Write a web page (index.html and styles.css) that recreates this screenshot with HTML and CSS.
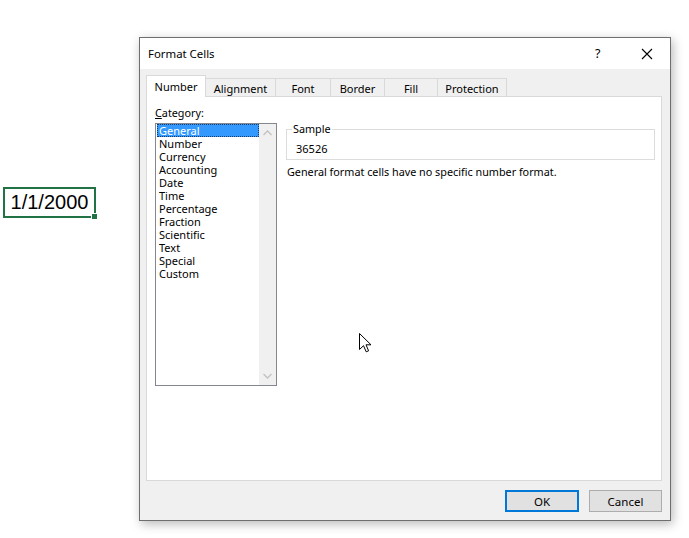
FILE: index.html
```html
<!DOCTYPE html>
<html>
<head>
<meta charset="utf-8">
<link rel="stylesheet" href="styles.css">
</head>
<body>
<div class="desk">
  <div class="cell">1/1/2000<span class="handle"></span></div>
  <div class="dialog">
    <div class="titlebar">
      <span class="title">Format Cells</span>
      <span class="help">?</span>
      <span class="close"><svg width="12" height="12" viewBox="0 0 12 12"><path d="M1 1 L11 11 M11 1 L1 11" stroke="#000" stroke-width="1.1" fill="none"/></svg></span>
    </div>
    <div class="content">
      <div class="tabs">
        <div class="tab active">Number</div>
        <div class="tab t-align">Alignment</div>
        <div class="tab t-font">Font</div>
        <div class="tab t-border">Border</div>
        <div class="tab t-fill">Fill</div>
        <div class="tab t-prot">Protection</div>
      </div>
      <div class="panel">
        <div class="left">
          <div class="cat-label"><u>C</u>ategory:</div>
          <div class="listbox">
            <div class="items">
              <div class="item selected">General</div>
              <div class="item">Number</div>
              <div class="item">Currency</div>
              <div class="item">Accounting</div>
              <div class="item">Date</div>
              <div class="item">Time</div>
              <div class="item">Percentage</div>
              <div class="item">Fraction</div>
              <div class="item">Scientific</div>
              <div class="item">Text</div>
              <div class="item">Special</div>
              <div class="item">Custom</div>
            </div>
            <div class="scrollbar">
              <svg width="9" height="6" viewBox="0 0 9 6"><path d="M0.5 5 L4.5 1 L8.5 5" stroke="#c2c2c2" stroke-width="1.3" fill="none"/></svg>
              <svg width="9" height="6" viewBox="0 0 9 6"><path d="M0.5 1 L4.5 5 L8.5 1" stroke="#c2c2c2" stroke-width="1.3" fill="none"/></svg>
            </div>
          </div>
        </div>
        <div class="right">
          <fieldset class="sample">
            <legend>Sample</legend>
            <div class="sample-value">36526</div>
          </fieldset>
          <div class="desc">General format cells have no specific number format.</div>
        </div>
      </div>
      <div class="buttons">
        <div class="btn ok">OK</div>
        <div class="btn cancel">Cancel</div>
      </div>
    </div>
  </div>
</div>
<svg class="cursor" width="13" height="20" viewBox="0 0 13 20"><path d="M0.5 0.5 L0.5 16.5 L4.5 12.7 L7.2 18.8 L9.6 17.8 L7 11.8 L12 11.8 Z" fill="#fff" stroke="#000" stroke-width="1" stroke-linejoin="miter"/></svg>
</body>
</html>
```
FILE: styles.css
```css
html, body {
  margin: 0;
  padding: 0;
  background: #ffffff;
}
body {
  width: 689px;
  height: 538px;
  overflow: hidden;
  position: relative;
  font-family: "Noto Sans", "Open Sans", sans-serif;
  font-size: 11px;
  color: #000;
}
.desk {
  display: flex;
  align-items: flex-start;
  padding: 37px 0 0 3px;
}
.cell {
  position: relative;
  margin-top: 150px;
  width: 89px;
  height: 27px;
  border: 2px solid #217346;
  font-family: "Liberation Sans", Arial, sans-serif;
  font-size: 20px;
  line-height: 27px;
  text-align: center;
  color: #000;
}
.handle {
  position: absolute;
  right: -4px;
  bottom: -4px;
  width: 5px;
  height: 5px;
  background: #217346;
  border: 1px solid #fff;
}
.dialog {
  margin-left: 43px;
  width: 530px;
  height: 482px;
  border: 1px solid #6e6e6e;
  background: #f0f0f0;
  box-shadow: 2px 3px 10px rgba(0,0,0,0.28);
  display: flex;
  flex-direction: column;
}
.titlebar {
  height: 31px;
  background: #fff;
  display: flex;
  align-items: center;
  padding-left: 8px;
}
.title {
  flex: 1;
  font-size: 11.4px;
}
.help {
  font-size: 12.5px;
  width: 12px;
  margin-right: 34px;
}
.close {
  width: 12px;
  margin-right: 17px;
  display: flex;
}
.content {
  padding: 7px 8px 0 6px;
  display: flex;
  flex-direction: column;
}
.tabs {
  display: flex;
  height: 20px;
  align-items: flex-end;
  position: relative;
  z-index: 1;
}
.tab {
  box-sizing: border-box;
  height: 18px;
  border-top: 1px solid #d9d9d9;
  border-right: 1px solid #d9d9d9;
  background: #f0f0f0;
  display: flex;
  align-items: center;
  justify-content: center;
  font-size: 11px;
  padding-top: 1px;
}
.tab.active {
  width: 60px;
  height: 22px;
  margin-bottom: -1px;
  border-left: 1px solid #d9d9d9;
  background: #fff;
  padding-top: 0;
  padding-bottom: 1px;
}
.t-align { width: 70px; }
.t-font { width: 55px; }
.t-border { width: 54px; }
.t-fill { width: 53px; }
.t-prot { width: 69px; }
.panel {
  height: 383px;
  border: 1px solid #d9d9d9;
  background: #fff;
  display: flex;
  align-items: flex-start;
}
.left {
  margin-left: 8px;
  width: 122px;
}
.cat-label {
  margin-top: 9px;
  height: 17px;
  line-height: 14px;
  font-size: 10.8px;
}
.listbox {
  width: 120px;
  height: 261px;
  border: 1px solid #828790;
  display: flex;
}
.items {
  flex: 1;
  padding: 0 0 0 1px;
}
.item {
  height: 13px;
  line-height: 13px;
  padding-left: 2px;
  font-size: 11px;
}
.item.selected {
  background: #3399ff;
  color: #fff;
  outline: 1px dotted #1a3a66;
  outline-offset: -1px;
}
.scrollbar {
  width: 17px;
  background: #f0f0f0;
  display: flex;
  flex-direction: column;
  justify-content: space-between;
  align-items: center;
  padding: 6px 0 6px;
}
.right {
  margin-left: 9px;
  width: 369px;
}
.sample {
  margin: 25px 0 0 0;
  padding: 4px 0 0 9px;
  height: 32px;
  border: 1px solid #dcdcdc;
  min-width: 0;
}
.sample legend {
  padding: 0 1px;
  margin-left: -4px;
  font-size: 10.8px;
  line-height: 14px;
}
.sample-value {
  line-height: 18px;
  font-size: 11px;
}
.desc {
  margin-top: 5px;
  margin-left: 1px;
  font-size: 10.8px;
  line-height: 14px;
}
.buttons {
  display: flex;
  justify-content: flex-end;
  gap: 10px;
  margin-top: 9px;
}
.btn {
  height: 22px;
  box-sizing: border-box;
  background: #e1e1e1;
  display: flex;
  align-items: center;
  justify-content: center;
  font-size: 11.5px;
}
.ok {
  width: 74px;
  border: 2px solid #0078d7;
}
.cancel {
  width: 73px;
  border: 1px solid #adadad;
}
.cursor {
  position: absolute;
  left: 359px;
  top: 333px;
}
```
